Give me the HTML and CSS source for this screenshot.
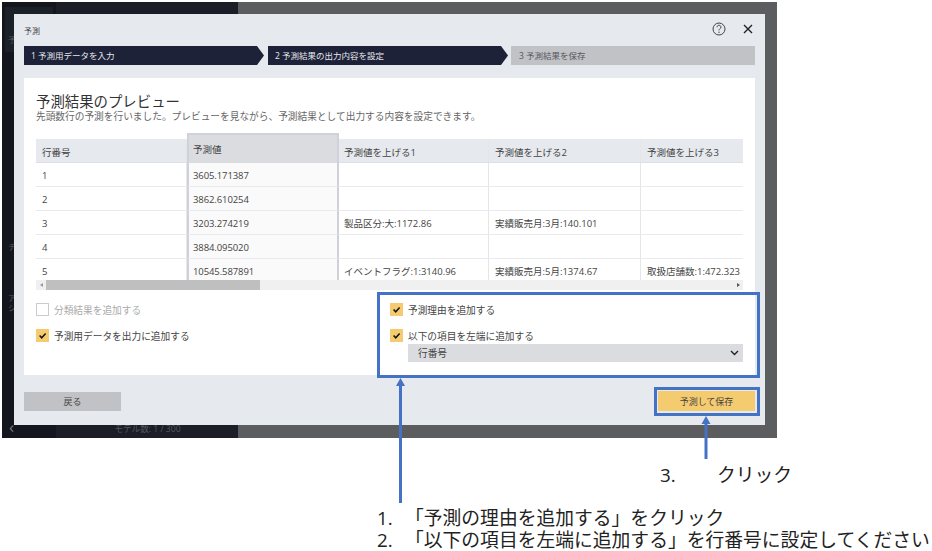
FILE: index.html
```html
<!DOCTYPE html>
<html lang="ja">
<head>
  <meta charset="UTF-8">
  <meta name="viewport" content="width=device-width, initial-scale=1.0">
  <title>予測</title>
  <link rel="stylesheet" href="styles.css">
</head>
<body>
  <div class="shot">
    <!-- dimmed app behind the dialog -->
    <div class="app">
      <div class="app-side">
        <span class="side-tab"></span>
        <span class="side-mark m1">予</span>
        <span class="side-mark m2">チ</span>
        <span class="side-mark m3">ア</span>
        <span class="side-mark m4">シ</span>
        <span class="side-back">‹</span>
      </div>
      <div class="app-list"><span class="model-count">モデル数: 1 / 300</span></div>
      <div class="app-main"></div>
    </div>

    <div class="modal">
      <div class="modal-head">
        <span class="modal-title">予測</span>
        <svg class="icon-help" width="14" height="14" viewBox="0 0 14 14">
          <circle cx="7" cy="7" r="6" fill="none" stroke="#444" stroke-width="1"/>
          <path d="M5 5.2C5 3.9 6 3.3 7 3.3S9 4 9 5.1C9 6.5 7 6.6 7 8.4" fill="none" stroke="#444" stroke-width="1"/>
          <circle cx="7" cy="10.3" r=".7" fill="#444"/>
        </svg>
        <svg class="icon-close" width="10" height="10" viewBox="0 0 10 10">
          <path d="M1 1L9 9M9 1L1 9" stroke="#222" stroke-width="1.4"/>
        </svg>
      </div>

      <div class="steps">
        <div class="step">1 予測用データを入力</div>
        <div class="step">2 予測結果の出力内容を設定</div>
        <div class="step step-off">3 予測結果を保存</div>
      </div>

      <div class="panel">
        <h1 class="panel-title">予測結果のプレビュー</h1>
        <p class="panel-sub">先頭数行の予測を行いました。プレビューを見ながら、予測結果として出力する内容を設定できます。</p>

        <div class="table-wrap">
          <div class="table">
            <div class="th">行番号</div><div class="th hl">予測値</div><div class="th">予測値を上げる1</div><div class="th">予測値を上げる2</div><div class="th">予測値を上げる3</div>
            <div class="td">1</div><div class="td hl">3605.171387</div><div class="td"></div><div class="td"></div><div class="td"></div>
            <div class="td">2</div><div class="td hl">3862.610254</div><div class="td"></div><div class="td"></div><div class="td"></div>
            <div class="td">3</div><div class="td hl">3203.274219</div><div class="td">製品区分:大:1172.86</div><div class="td">実績販売月:3月:140.101</div><div class="td"></div>
            <div class="td">4</div><div class="td hl">3884.095020</div><div class="td"></div><div class="td"></div><div class="td"></div>
            <div class="td">5</div><div class="td hl">10545.587891</div><div class="td">イベントフラグ:1:3140.96</div><div class="td">実績販売月:5月:1374.67</div><div class="td">取扱店舗数:1:472.323</div>
          </div>
        </div>
        <div class="scrollbar">
          <span class="arrow-left"></span>
          <span class="thumb"></span>
          <span class="arrow-right"></span>
        </div>

        <div class="options">
          <div class="opt-col">
            <div class="opt opt-off"><span class="box"></span>分類結果を追加する</div>
            <div class="opt">
              <span class="box on"><svg width="13" height="13" viewBox="0 0 13 13"><path d="M3.6 6.6L5.7 8.8L9.6 4.6" fill="none" stroke="#111" stroke-width="1.5"/></svg></span>予測用データを出力に追加する
            </div>
          </div>
          <div class="opt-col opt-col-right">
            <div class="opt">
              <span class="box on"><svg width="13" height="13" viewBox="0 0 13 13"><path d="M3.6 6.6L5.7 8.8L9.6 4.6" fill="none" stroke="#111" stroke-width="1.5"/></svg></span>予測理由を追加する
            </div>
            <div class="opt">
              <span class="box on"><svg width="13" height="13" viewBox="0 0 13 13"><path d="M3.6 6.6L5.7 8.8L9.6 4.6" fill="none" stroke="#111" stroke-width="1.5"/></svg></span>以下の項目を左端に追加する
            </div>
            <div class="select">
              行番号
              <svg width="9" height="6" viewBox="0 0 9 6"><path d="M1 1L4.500 4.500L8 1" fill="none" stroke="#222" stroke-width="1.400"/></svg>
            </div>
          </div>
        </div>
      </div>

      <div class="modal-foot">
        <button class="btn">戻る</button>
        <button class="btn btn-save">予測して保存</button>
      </div>
    </div>
  </div>

  <!-- annotations drawn on top of the screenshot -->
  <div class="frame frame-options"></div>
  <div class="frame frame-save"></div>
  <svg class="arrows" width="932" height="551" viewBox="0 0 932 551">
    <path d="M400.500 384V503" stroke="#4472c4" stroke-width="3"/>
    <path d="M400.500 378L405 386H396Z" fill="#4472c4"/>
    <path d="M706 422V459" stroke="#4472c4" stroke-width="3"/>
    <path d="M706 416L710.500 424H701.500Z" fill="#4472c4"/>
  </svg>
  <div class="note note-click"><span class="num-click">3.</span>クリック</div>
  <ol class="note-list">
    <li><span class="num">1.</span>「予測の理由を追加する」をクリック</li>
    <li><span class="num">2.</span>「以下の項目を左端に追加する」を行番号に設定してください</li>
  </ol>
</body>
</html>
```

FILE: styles.css
```css
/* Page and screenshot base */
body {
  margin: 0;
  background: #fff;
  width: 932px;
  height: 551px;
  overflow: hidden;
  position: relative;
  font-family: "Open Sans", "Noto Sans CJK JP", sans-serif;
  color: #444;
}
.shot {
  position: relative;
  width: 775px;
  height: 436px;
  margin: 2px 0 0 2px;
}

/* Dimmed application behind the dialog */
.app {
  display: flex;
  height: 100%;
}
.app-side {
  position: relative;
  width: 54px;
  background: #13161c;
}
.side-tab {
  position: absolute;
  left: 3px;
  top: 5px;
  width: 48px;
  height: 45px;
  background: #1c2028;
}
.side-mark {
  position: absolute;
  left: 6px;
  font-size: 8px;
  line-height: 10px;
  color: #55585d;
}
.m1 { top: 33px; }
.m2 { top: 240px; }
.m3 { top: 291px; }
.m4 { top: 301px; }
.side-back {
  position: absolute;
  left: 7px;
  top: 416px;
  font-size: 17px;
  line-height: 18px;
  color: #77797d;
}
.app-list {
  width: 182px;
  background: #1b1e27;
  display: flex;
  justify-content: center;
  align-items: flex-end;
}
.model-count {
  font-size: 8.600px;
  line-height: 18px;
  margin-left: 1px;
  color: #55585e;
}
.app-main {
  flex: 1;
  background: #5c5d5f;
}

/* Dialog */
.modal {
  position: absolute;
  left: 12px;
  top: 12px;
  width: 751px;
  height: 411px;
  box-sizing: border-box;
  padding: 0 10px;
  background: #e6e9ee;
}
.modal-head {
  display: flex;
  align-items: center;
  height: 32px;
}
.modal-title {
  flex: 1;
  font-size: 8px;
  color: #444;
}
.icon-help {
  margin-right: 17px;
  margin-top: -2px;
}
.icon-close {
  margin-right: 2px;
  margin-top: -2px;
}

/* Wizard steps */
.steps {
  display: flex;
  height: 19px;
}
.step {
  width: 240px;
  margin-right: 4px;
  box-sizing: border-box;
  padding-left: 7px;
  background: #1e2238;
  color: #e8e9ee;
  font-size: 8.500px;
  line-height: 19px;
  clip-path: polygon(0 0, 233px 0, 100% 50%, 233px 100%, 0 100%);
}
.step-off {
  flex: 1;
  width: auto;
  margin: 0 0 0 -1px;
  padding-left: 8px;
  background: #c0c2c6;
  color: #55575c;
  clip-path: none;
}

/* White content panel */
.panel {
  height: 297px;
  margin-top: 13px;
  box-sizing: border-box;
  padding: 14px 12px 0;
  background: #fff;
}
.panel-title {
  margin: 0;
  font-size: 14.400px;
  font-weight: 400;
  line-height: 19px;
  color: #333;
}
.panel-sub {
  margin: 0;
  font-size: 9.700px;
  line-height: 12px;
  color: #666;
}

/* Preview table */
.table-wrap {
  height: 147px;
  margin-top: 10px;
  overflow: hidden;
}
.table {
  display: grid;
  grid-template-columns: 151px 152px 150px 152px 102px;
  padding-top: 6px;
  font-size: 9.500px;
}
.th, .td {
  box-sizing: border-box;
  height: 24px;
  padding-left: 6px;
  white-space: nowrap;
  overflow: hidden;
  border-right: 1px solid #e4e6ea;
}
.th {
  line-height: 27px;
  background: #e6e9ee;
  border-bottom: 1px solid #dcdfe4;
}
.td {
  line-height: 26px;
  border-bottom: 1px solid #e8eaed;
}
.th:nth-child(5n+3), .td:nth-child(5n+3) {
  padding-left: 5px;
}
.th.hl {
  height: 30px;
  margin-top: -6px;
  line-height: 30px;
  background: #dbdce0;
  border: 2px solid #d0d2d9;
  border-bottom: 0;
  padding-left: 4px;
}
.td.hl {
  background: #fafafa;
  padding-left: 4px;
  border-left: 2px solid #d0d2d9;
  border-right: 2px solid #d0d2d9;
  letter-spacing: -.1px;
}
.th:nth-child(5n), .td:nth-child(5n) {
  border-right: 0;
}

/* Fake horizontal scrollbar */
.scrollbar {
  display: flex;
  align-items: center;
  height: 10px;
  background: #f0f0f0;
}
.arrow-left, .arrow-right {
  width: 0;
  height: 0;
  border-top: 2px solid transparent;
  border-bottom: 2px solid transparent;
}
.arrow-left {
  margin: 0 4px 0 4px;
  border-right: 3px solid #999;
}
.thumb {
  width: 214px;
  height: 100%;
  margin-left: -1px;
  background: #bfbfbf;
}
.arrow-right {
  margin: 0 3px 0 auto;
  border-left: 3px solid #555;
}

/* Checkbox options */
.options {
  display: grid;
  grid-template-columns: 354px 353px;
  padding-top: 13px;
}
.opt {
  display: flex;
  align-items: center;
  height: 13px;
  margin-bottom: 13px;
  font-size: 9.700px;
  color: #444;
}
.opt-off {
  color: #aaa;
}
.box {
  flex: none;
  width: 13px;
  height: 13px;
  margin-right: 5px;
  box-sizing: border-box;
  border: 1px solid #ccc;
  background: #fff;
}
.box.on {
  border: 0;
  background: #f5cb70;
}
.box svg {
  display: block;
}
.select {
  display: flex;
  justify-content: space-between;
  align-items: center;
  height: 18px;
  margin: -11px 0 0 18px;
  padding: 0 4px 0 10px;
  background: #dbdce0;
  font-size: 9.700px;
  color: #444;
}

/* Footer buttons */
.modal-foot {
  display: flex;
  justify-content: space-between;
  align-items: center;
  padding-top: 16px;
}
.btn {
  width: 97px;
  height: 19px;
  padding: 1px 0 0;
  border: 0;
  background: #c0c2c6;
  font-family: inherit;
  font-size: 9px;
  color: #444;
}
.btn-save {
  height: 20px;
  background: #f5cb70;
}

/* Annotations */
.frame {
  position: absolute;
  box-sizing: border-box;
  border: 3px solid #4472c4;
}
.frame-options {
  left: 377px;
  top: 292px;
  width: 383px;
  height: 86px;
}
.frame-save {
  left: 654px;
  top: 387px;
  width: 106px;
  height: 29px;
}
.arrows {
  position: absolute;
  left: 0;
  top: 0;
}
.note {
  position: absolute;
  left: 660px;
  top: 464px;
  font-size: 18.800px;
  line-height: 22px;
  color: #222;
  white-space: nowrap;
}
.num-click {
  display: inline-block;
  width: 57px;
}
.note-list {
  position: absolute;
  left: 377px;
  top: 507px;
  margin: 0;
  padding: 0;
  list-style: none;
  font-size: 18.800px;
  line-height: 22px;
  color: #222;
  white-space: nowrap;
}
.num {
  display: inline-block;
  width: 28px;
}
```
